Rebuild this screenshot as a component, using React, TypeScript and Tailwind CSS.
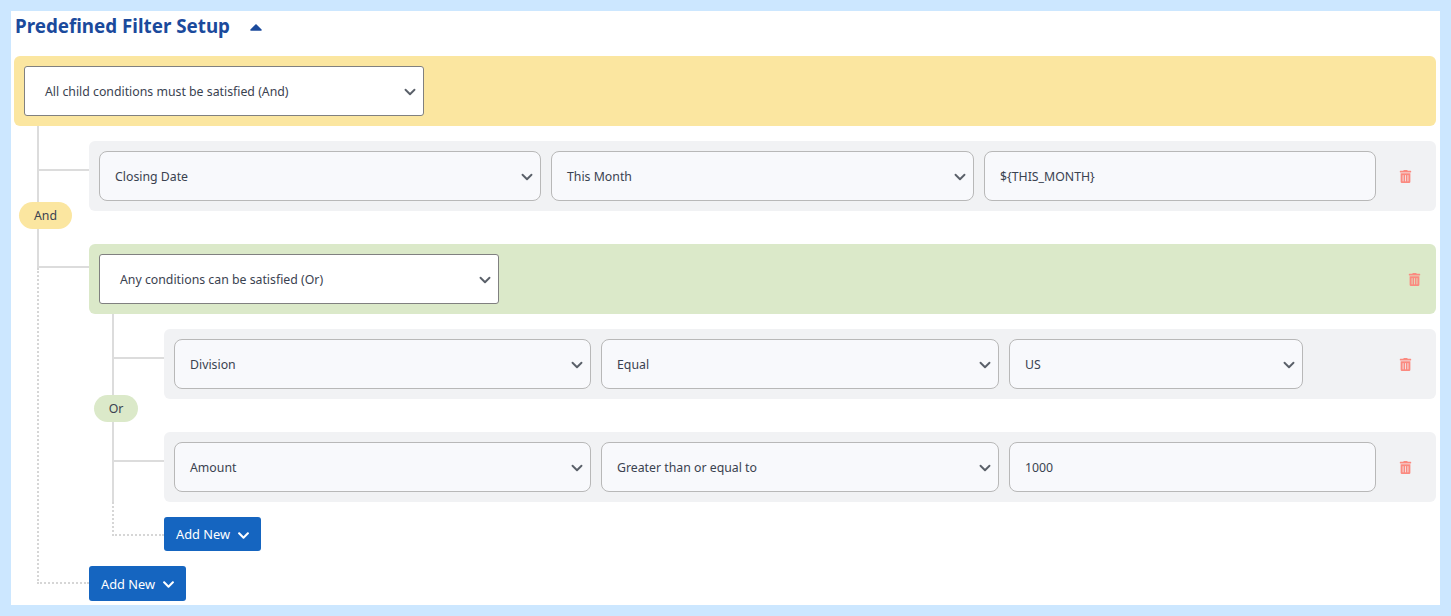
import { ChevronDown } from "lucide-react";
import { FaCaretUp, FaChevronDown, FaTrashAlt } from "react-icons/fa";

const font = "font-['Noto_Sans','Open_Sans',sans-serif]";

function Field({ value, select = false, className = "" }: { value: string; select?: boolean; className?: string }) {
  return (
    <div className={`flex h-[50px] items-center justify-between rounded-lg border border-[#b8b8b8] bg-[#f8f9fc] pl-[15px] pr-[4px] pt-[2px] text-[12.3px] text-[#3a4250] ${className}`}>
      <span>{value}</span>
      {select && <ChevronDown size={18} strokeWidth={2.5} className="text-[#5a6069]" />}
    </div>
  );
}

function GroupSelect({ value }: { value: string }) {
  return (
    <div className="flex h-[50px] w-[400px] items-center justify-between rounded-[3px] border border-[#808080] bg-white pl-[20px] pr-[4px] pt-[2px] text-[12.3px] text-[#3a4250]">
      <span>{value}</span>
      <ChevronDown size={18} strokeWidth={2.5} className="text-[#5a6069]" />
    </div>
  );
}

function Trash() {
  return <FaTrashAlt size={13} className="text-[#fb8a80]" />;
}

function Branch({ className }: { className: string }) {
  return <div className={`absolute h-[2px] bg-[#dcdcdc] ${className}`} />;
}

function Pill({ label, className }: { label: string; className: string }) {
  return (
    <div className={`absolute flex h-[27px] items-center justify-center rounded-full pt-[2px] text-[12.3px] text-[#3a4250] ${className}`}>
      {label}
    </div>
  );
}

function AddNew({ height = "h-[34px]" }: { height?: string }) {
  return (
    <button className={`flex w-[97px] items-center justify-center gap-[7px] rounded-[3px] bg-[#1565c0] pl-[1px] pt-[2px] text-[12.8px] text-white ${height}`}>
      Add New
      <FaChevronDown size={13} />
    </button>
  );
}

function Row({ fields }: { fields: { value: string; select?: boolean; className: string }[] }) {
  return (
    <div className="relative flex h-[70px] items-center justify-between rounded-md bg-[#f1f2f4] pl-[10px] pr-[24px]">
      <Branch className="left-[-50px] top-[28px] w-[50px]" />
      <div className="flex gap-[10px]">
        {fields.map((f) => (
          <Field key={f.value} value={f.value} select={f.select} className={f.className} />
        ))}
      </div>
      <Trash />
    </div>
  );
}

export default function App() {
  return (
    <div className={`h-[616px] w-[1451px] bg-[#cce7ff] p-[11px] ${font}`}>
      <div className="h-[594px] w-[1429px] bg-white pl-[3px] pr-[4px]">
        <div className="flex h-[45px] items-center gap-[16px] pb-[15px] pl-[1px] pt-[1px] text-[18.8px] font-bold text-[#1b4a9c]">
          Predefined Filter Setup
          <FaCaretUp size={20} />
        </div>

        <div className="flex h-[70px] items-center rounded-md bg-[#fbe6a0] pl-[10px]">
          <GroupSelect value="All child conditions must be satisfied (And)" />
        </div>

        {/* And branch */}
        <div className="relative pl-[75px] pt-[15px]">
          <div className="absolute left-[23px] top-0 h-[142px] w-[2px] bg-[#dcdcdc]" />
          <div className="absolute bottom-[17px] left-[23px] h-[316px] w-[52px] border-b-2 border-l-2 border-dotted border-[#d6d6d6]" />
          <Pill label="And" className="left-[5px] top-[76px] w-[53px] bg-[#fbe6a0]" />

          <Row
            fields={[
              { value: "Closing Date", select: true, className: "w-[442px]" },
              { value: "This Month", select: true, className: "w-[423px]" },
              { value: "${THIS_MONTH}", className: "w-[392px]" },
            ]}
          />

          <div className="relative mt-[33px] flex h-[70px] items-center justify-between rounded-md bg-[#dbe9c9] pl-[10px] pr-[15px]">
            <Branch className="left-[-50px] top-[22px] w-[50px]" />
            <GroupSelect value="Any conditions can be satisfied (Or)" />
            <Trash />
          </div>

          {/* Or branch */}
          <div className="relative pl-[75px] pt-[15px]">
            <div className="absolute left-[23px] top-0 h-[188px] w-[2px] bg-[#dcdcdc]" />
            <div className="absolute bottom-[15px] left-[23px] h-[34px] w-[52px] border-b-2 border-l-2 border-dotted border-[#d6d6d6]" />
            <Pill label="Or" className="left-[5px] top-[81px] w-[44px] bg-[#dbe9c9]" />

            <div className="flex flex-col gap-[33px]">
              <Row
                fields={[
                  { value: "Division", select: true, className: "w-[417px]" },
                  { value: "Equal", select: true, className: "w-[398px]" },
                  { value: "US", select: true, className: "w-[294px]" },
                ]}
              />
              <Row
                fields={[
                  { value: "Amount", select: true, className: "w-[417px]" },
                  { value: "Greater than or equal to", select: true, className: "w-[398px]" },
                  { value: "1000", className: "w-[367px]" },
                ]}
              />
            </div>
            <div className="mt-[15px]">
              <AddNew />
            </div>
          </div>

          <div className="mt-[15px]">
            <AddNew height="h-[35px]" />
          </div>
        </div>
      </div>
    </div>
  );
}
